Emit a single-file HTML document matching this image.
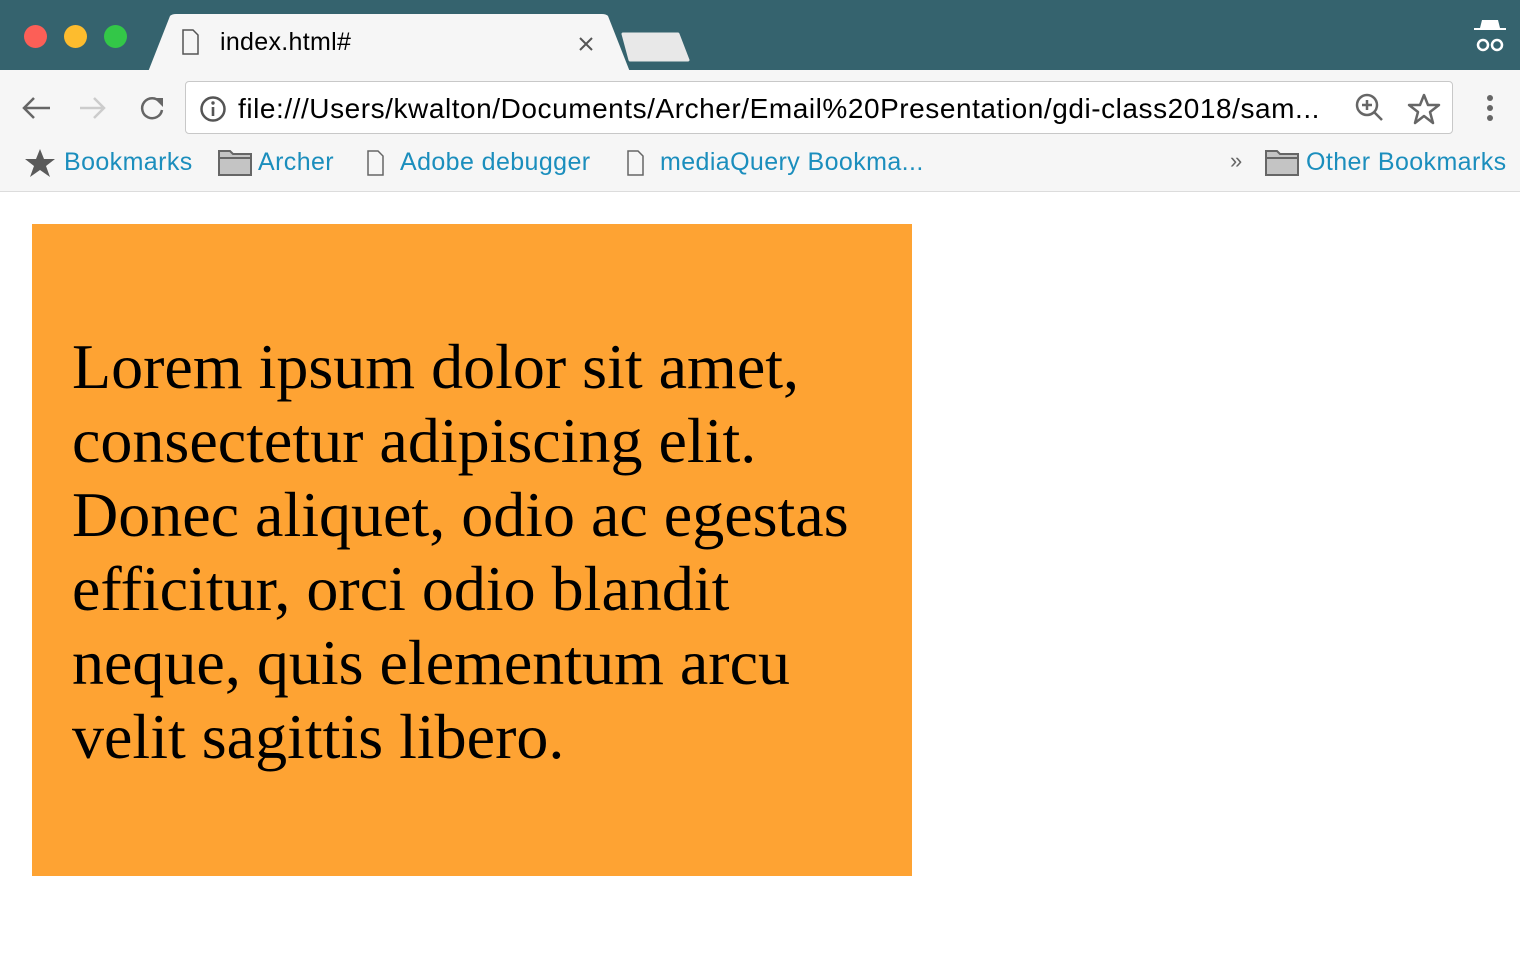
<!DOCTYPE html>
<html><head><style>
*{margin:0;padding:0;box-sizing:border-box}
body{width:1520px;height:972px;overflow:hidden;background:#fff;font-family:"Liberation Sans",sans-serif;position:relative}
.top{position:absolute;left:0;top:0;width:1520px;height:71px;background:#35636e}
.dot{position:absolute;top:25px;width:23px;height:23px;border-radius:50%}
.tb{position:absolute;left:0;top:70px;width:1520px;height:122px;background:#f6f6f6;border-bottom:1px solid #dcdcdc}
.url{position:absolute;left:185px;top:81px;width:1268px;height:53px;background:#fff;border:1px solid #c8c8c8;border-radius:4px}
.bm{position:absolute;top:148px;font-size:25px;letter-spacing:0.4px;color:#1b8ebd;white-space:nowrap}
.box{position:absolute;left:32px;top:224px;width:880px;height:652px;background:#fea333}
.txt{position:absolute;left:72px;top:330px;width:830px;font-family:"Liberation Serif",serif;font-size:64px;line-height:74px;color:#000}
</style></head><body>
<div class="top"></div>
<div class="dot" style="left:24px;background:#fc5f57"></div>
<div class="dot" style="left:64px;background:#fdbc2e"></div>
<div class="dot" style="left:104px;background:#33c748"></div>
<svg style="position:absolute;left:140px;top:14px" width="560" height="58"><path d="M8 58 L30 2 Q32 0 36 0 L462 0 Q466 0 468 2 L490 58 Z" fill="#f6f6f6"/><path d="M483 20 L538 20 L548 46 L490 46 Z" fill="#e8e8e8" stroke="#e8e8e8" stroke-linejoin="round" stroke-width="3"/>
<path d="M43 16 h10 l5 5 v19 h-15 z" fill="none" stroke="#555" stroke-width="1.5"/>
<path d="M440 24 l12 12 M452 24 l-12 12" stroke="#555" stroke-width="2"/></svg>
<div style="position:absolute;left:220px;top:28px;font-size:25px;letter-spacing:0.3px;color:#000">index.html#</div>
<svg style="position:absolute;left:1472px;top:18px" width="36" height="34"><path d="M10 2 h16 l2 8 h6 v2 H2 v-2 h6 z" fill="#fff"/><circle cx="11" cy="27" r="5" fill="none" stroke="#fff" stroke-width="2.5"/><circle cx="25" cy="27" r="5" fill="none" stroke="#fff" stroke-width="2.5"/></svg>
<div class="tb"></div>
<svg style="position:absolute;left:20px;top:92px" width="160" height="32"><path d="M30 16 H4 M14 6 L4 16 L14 26" fill="none" stroke="#666" stroke-width="2.5"/><path d="M60 16 H84 M74 6 L84 16 L74 26" fill="none" stroke="#ccc" stroke-width="2.5"/><path d="M140 10 A10 10 0 1 0 142 18" fill="none" stroke="#666" stroke-width="2.5"/><path d="M134 6 h9 v-1 v10 z" fill="#666"/></svg>
<div class="url"></div>
<svg style="position:absolute;left:199px;top:95px" width="28" height="28"><circle cx="14" cy="14" r="11.5" fill="none" stroke="#555" stroke-width="2.5"/><rect x="12.7" y="12" width="2.6" height="9" fill="#555"/><circle cx="14" cy="8" r="1.7" fill="#555"/></svg>
<div style="position:absolute;left:238px;top:93px;font-size:28px;letter-spacing:0.55px;color:#000;white-space:nowrap">file:///Users/kwalton/Documents/Archer/Email%20Presentation/gdi-class2018/sam...</div>
<svg style="position:absolute;left:1354px;top:92px" width="90" height="34"><circle cx="13" cy="13" r="10" fill="none" stroke="#666" stroke-width="2.5"/><path d="M8 13h10M13 8v10M20 20 L28 28" stroke="#666" stroke-width="2.5"/><path d="M70 3 L74 13 L85 13 L76 20 L79 31 L70 24 L61 31 L64 20 L55 13 L66 13 Z" fill="none" stroke="#666" stroke-width="2.5" stroke-linejoin="round"/></svg>
<svg style="position:absolute;left:1484px;top:94px" width="12" height="30"><circle cx="6" cy="4" r="3" fill="#666"/><circle cx="6" cy="14" r="3" fill="#666"/><circle cx="6" cy="24" r="3" fill="#666"/></svg>
<svg style="position:absolute;left:24px;top:148px" width="32" height="30"><path d="M16 1 L20 11 L31 11 L22 18 L26 29 L16 22 L6 29 L10 18 L1 11 L12 11 Z" fill="#5a5a5a"/></svg>
<div class="bm" style="left:64px">Bookmarks</div>
<svg style="position:absolute;left:218px;top:150px" width="34" height="26"><path d="M1 1 h11 l3 3 h18 v21 H1 z" fill="#c4c4c4" stroke="#666" stroke-width="2"/><path d="M1 8 H33" stroke="#666" stroke-width="2"/></svg>
<div class="bm" style="left:258px">Archer</div>
<svg style="position:absolute;left:366px;top:150px" width="20" height="26"><path d="M2 1 h10 l5 5 v19 h-15 z" fill="none" stroke="#666" stroke-width="1.5"/></svg>
<div class="bm" style="left:400px">Adobe debugger</div>
<svg style="position:absolute;left:626px;top:150px" width="20" height="26"><path d="M2 1 h10 l5 5 v19 h-15 z" fill="none" stroke="#666" stroke-width="1.5"/></svg>
<div class="bm" style="left:660px">mediaQuery Bookma...</div>
<div style="position:absolute;left:1230px;top:148px;font-size:22px;color:#666">»</div>
<svg style="position:absolute;left:1265px;top:150px" width="34" height="26"><path d="M1 1 h11 l3 3 h18 v21 H1 z" fill="#c4c4c4" stroke="#666" stroke-width="2"/><path d="M1 8 H33" stroke="#666" stroke-width="2"/></svg>
<div class="bm" style="left:1306px">Other Bookmarks</div>
<div class="box"></div>
<div class="txt">Lorem ipsum dolor sit amet, consectetur adipiscing elit. Donec aliquet, odio ac egestas efficitur, orci odio blandit neque, quis elementum arcu velit sagittis libero.</div>
</body></html>
